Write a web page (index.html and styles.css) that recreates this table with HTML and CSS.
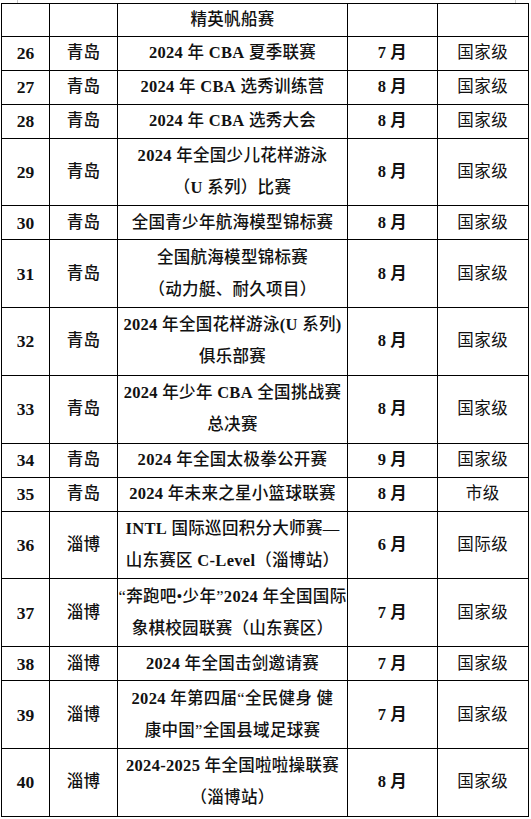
FILE: index.html
```html
<!DOCTYPE html>
<html lang="zh-CN">
<head>
<meta charset="utf-8">
<title>赛事列表</title>
<link rel="stylesheet" href="styles.css">
</head>
<body>
<div class="page">
  <span class="corner corner-left"></span>
  <span class="corner corner-right"></span>
  <table class="events">
    <colgroup>
      <col class="c-no"><col class="c-city"><col class="c-name"><col class="c-month"><col class="c-level">
    </colgroup>
    <tbody>
      <tr class="r0"><td></td><td></td><td class="name">精英帆船赛</td><td></td><td></td></tr>
      <tr class="r1"><td class="no">26</td><td class="city">青岛</td><td class="name"><b class="lat">2024</b> 年 <b class="lat">CBA</b> 夏季联赛</td><td class="month">7 月</td><td class="level">国家级</td></tr>
      <tr class="r1"><td class="no">27</td><td class="city">青岛</td><td class="name"><b class="lat">2024</b> 年 <b class="lat">CBA</b> 选秀训练营</td><td class="month">8 月</td><td class="level">国家级</td></tr>
      <tr class="r1"><td class="no">28</td><td class="city">青岛</td><td class="name"><b class="lat">2024</b> 年 <b class="lat">CBA</b> 选秀大会</td><td class="month">8 月</td><td class="level">国家级</td></tr>
      <tr class="r2"><td class="no">29</td><td class="city">青岛</td><td class="name"><b class="lat">2024</b> 年全国少儿花样游泳<br>（<b class="lat">U</b> 系列）比赛</td><td class="month">8 月</td><td class="level">国家级</td></tr>
      <tr class="r1"><td class="no">30</td><td class="city">青岛</td><td class="name">全国青少年航海模型锦标赛</td><td class="month">8 月</td><td class="level">国家级</td></tr>
      <tr class="r2"><td class="no">31</td><td class="city">青岛</td><td class="name">全国航海模型锦标赛<br>（动力艇、耐久项目）</td><td class="month">8 月</td><td class="level">国家级</td></tr>
      <tr class="r2"><td class="no">32</td><td class="city">青岛</td><td class="name"><b class="lat">2024</b> 年全国花样游泳<b class="lat">(U</b> 系列<b class="lat">)</b><br>俱乐部赛</td><td class="month">8 月</td><td class="level">国家级</td></tr>
      <tr class="r2"><td class="no">33</td><td class="city">青岛</td><td class="name"><b class="lat">2024</b> 年少年 <b class="lat">CBA</b> 全国挑战赛<br>总决赛</td><td class="month">8 月</td><td class="level">国家级</td></tr>
      <tr class="r1"><td class="no">34</td><td class="city">青岛</td><td class="name"><b class="lat">2024</b> 年全国太极拳公开赛</td><td class="month">9 月</td><td class="level">国家级</td></tr>
      <tr class="r1"><td class="no">35</td><td class="city">青岛</td><td class="name"><b class="lat">2024</b> 年未来之星小篮球联赛</td><td class="month">8 月</td><td class="level">市级</td></tr>
      <tr class="r2"><td class="no">36</td><td class="city">淄博</td><td class="name"><b class="lat">INTL</b> 国际巡回积分大师赛—<br>山东赛区 <b class="lat">C-Level</b>（淄博站）</td><td class="month">6 月</td><td class="level">国际级</td></tr>
      <tr class="r2"><td class="no">37</td><td class="city">淄博</td><td class="name">“奔跑吧•少年”<b class="lat">2024</b> 年全国国际<br>象棋校园联赛（山东赛区）</td><td class="month">7 月</td><td class="level">国家级</td></tr>
      <tr class="r1"><td class="no">38</td><td class="city">淄博</td><td class="name"><b class="lat">2024</b> 年全国击剑邀请赛</td><td class="month">7 月</td><td class="level">国家级</td></tr>
      <tr class="r2"><td class="no">39</td><td class="city">淄博</td><td class="name"><b class="lat">2024</b> 年第四届“全民健身 健<br>康中国”全国县域足球赛</td><td class="month">7 月</td><td class="level">国家级</td></tr>
      <tr class="r2"><td class="no">40</td><td class="city">淄博</td><td class="name"><b class="lat">2024-2025</b> 年全国啦啦操联赛<br>（淄博站）</td><td class="month">8 月</td><td class="level">国家级</td></tr>
    </tbody>
  </table>
</div>
</body>
</html>
```
FILE: styles.css
```css
html, body {
  margin: 0;
  padding: 0;
  background: #fff;
}

.page {
  position: relative;
  padding: 2.5px 0 0 1px;
  width: 531px;
  box-sizing: border-box;
}

.corner {
  position: absolute;
  top: 0;
  width: 1px;
  height: 3px;
  background: #c8c8c8;
}
.corner-left { left: 17px; }
.corner-right { left: 515px; }

.events {
  border-collapse: collapse;
  table-layout: fixed;
  width: 527px;
  font-family: "Liberation Serif", "Noto Sans CJK SC", serif;
  font-size: 16.5px;
  color: #111;
}

.c-no { width: 48px; }
.c-city { width: 68px; }
.c-name { width: 230px; }
.c-month { width: 89.5px; }
.c-level { width: 91.5px; }

.events td {
  border: 1px solid #000;
  padding: 0;
  text-align: center;
  vertical-align: middle;
  line-height: 32px;
  white-space: nowrap;
  font-weight: 700;
}

.r0 { height: 33px; }
.r1 { height: 34px; }
.r2 { height: 67.8px; }

.events td.no {
  font-size: 17.5px;
}

.events td.city,
.events td.name {
  font-weight: 500;
  letter-spacing: 0.3px;
}

.lat {
  font-weight: 700;
}

.events td.month {
  font-weight: 700;
}

.events td.level {
  font-weight: 400;
  letter-spacing: 0.5px;
}
```
